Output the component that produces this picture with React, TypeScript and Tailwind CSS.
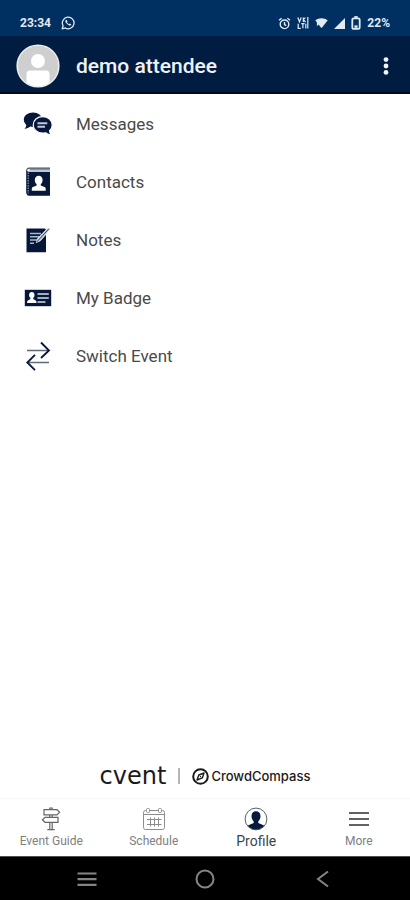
import React from 'react';

const NAVY = '#06173a';

const menuItems = [
  { label: 'Messages', icon: <MessagesIcon /> },
  { label: 'Contacts', icon: <ContactsIcon /> },
  { label: 'Notes', icon: <NotesIcon /> },
  { label: 'My Badge', icon: <BadgeIcon /> },
  { label: 'Switch Event', icon: <SwitchIcon /> },
];

const tabs = [
  { label: 'Event Guide', icon: <SignpostIcon />, active: false },
  { label: 'Schedule', icon: <CalendarIcon />, active: false },
  { label: 'Profile', icon: <ProfileIcon />, active: true },
  { label: 'More', icon: <MoreIcon />, active: false },
];

export default function App() {
  return (
    <div className="flex min-h-screen flex-col bg-white font-[Roboto,sans-serif]">
      <StatusBar />

      <header className="flex h-[58px] items-center border-b-2 border-[#020a18] bg-[#001d41] px-4 pt-1">
        <Avatar />
        <h1 className="ml-4 flex-1 text-[21px] leading-7 font-medium text-[#eef2f7]">demo attendee</h1>
        <button type="button" aria-label="More options" className="flex h-10 w-4 items-center justify-center">
          <svg width="6" height="18" viewBox="0 0 6 18" fill="#f1f4f8">
            <circle cx="3" cy="2.6" r="2.4" />
            <circle cx="3" cy="9" r="2.4" />
            <circle cx="3" cy="15.4" r="2.4" />
          </svg>
        </button>
      </header>

      <main className="flex flex-1 flex-col">
        <ul>
          {menuItems.map(item => (
            <li key={item.label}>
              <button type="button" className="flex h-[58px] w-full items-center px-6 pt-0.5 text-left">
                <span className="flex w-7 justify-center">{item.icon}</span>
                <span className="ml-6 text-[17px] leading-6 text-[#4a4a4a]">{item.label}</span>
              </button>
            </li>
          ))}
        </ul>
        <BrandFooter />
      </main>

      <nav className="grid h-[58px] grid-cols-4 border-t border-[#f7f7f7] bg-white">
        {tabs.map(tab => (
          <button
            key={tab.label}
            type="button"
            aria-current={tab.active ? 'page' : undefined}
            className="flex flex-col items-center pt-2"
          >
            <span className="flex h-6 items-center">{tab.icon}</span>
            <span
              className={
                tab.active
                  ? 'pt-0.5 text-[14px] leading-4 text-[#37474f]'
                  : 'pt-0.5 text-[12px] leading-4 text-[#808080]'
              }
            >
              {tab.label}
            </span>
          </button>
        ))}
      </nav>

      <SystemNav />
    </div>
  );
}

function StatusBar() {
  return (
    <div className="flex h-9 items-center justify-between bg-[#002f62] px-5 pt-2.5 text-[12px] leading-4 font-bold text-[#e3eaf2]">
      <div className="flex items-center gap-2.5">
        <span>23:34</span>
        <svg width="14" height="14" viewBox="0 0 24 24" fill="none" stroke="currentColor" strokeWidth="2.2">
          <path d="M2 22l1.6-5.2A10 10 0 1 1 7.2 20.500z" strokeLinejoin="round" />
          <path
            d="M8.300 6.800c-1.300 1-1.200 3 .6 5.400 2.200 3 5 4.800 7 4.200 1-.3 1.700-1.300 1.600-2.200l-2.600-1.400-1.300 1.300c-1.500-.6-2.700-1.800-3.400-3.200l1-1.300-1.200-2.800z"
            fill="currentColor"
            stroke="none"
          />
        </svg>
      </div>
      <div className="flex items-center gap-1.5">
        <svg width="13" height="13" viewBox="0 0 13 13" fill="none" stroke="currentColor" strokeWidth="1.4">
          <circle cx="6.500" cy="7.300" r="4.300" />
          <path d="M6.500 5v2.600l1.800 1M1 3.200l2.600-2M12 3.200l-2.600-2" />
        </svg>
        <svg width="12" height="12" viewBox="0 0 12 12" fill="none" stroke="currentColor" strokeWidth="1.200">
          <path d="M.8.6l1.700 4.200L4.200.6M6.300.4v4.600M6.300 2.700L8.400.6M6.300 2.700l2.300 2.300M10.800 0v11.500M1.200 6.700v4.600h2.600M4.200 6.700h3.400M5.900 6.700v4.600M8.800 6.800v4.600" />
        </svg>
        <svg width="13" height="12" viewBox="0 0 13 12" fill="currentColor">
          <path d="M.3 3.300C3.800.4 9.200.4 12.700 3.300L7.300 10.300a1 1 0 0 1-1.600 0L3.600 7.600 1.900 9.200V5.400z" />
        </svg>
        <svg width="11" height="11" viewBox="0 0 11 11" fill="currentColor">
          <path d="M11 0v11H0z" />
        </svg>
        <svg width="10" height="14" viewBox="0 0 10 14" fill="none" stroke="currentColor" strokeWidth="1.800">
          <rect x="1.300" y="2.300" width="7.400" height="10.600" rx="1.400" />
          <path d="M3.300 1h3.400" />
          <path d="M3.400 10.600h3.200" strokeWidth="2.400" />
        </svg>
        <span>22%</span>
      </div>
    </div>
  );
}

function Avatar() {
  return (
    <svg width="44" height="44" viewBox="0 0 44 44" aria-hidden="true">
      <defs>
        <clipPath id="avatar-clip">
          <circle cx="22" cy="22" r="20.500" />
        </clipPath>
      </defs>
      <circle cx="22" cy="22" r="20.500" fill="#cfcfcf" />
      <g clipPath="url(#avatar-clip)" fill="#ffffff">
        <circle cx="22" cy="17" r="7" />
        <path d="M10.500 44V30a3.500 3.500 0 0 1 3.500-3.500h16a3.500 3.500 0 0 1 3.500 3.500v14z" />
      </g>
      <circle cx="22" cy="22" r="20.800" fill="none" stroke="#eeeeee" strokeWidth="1.600" />
    </svg>
  );
}

function MessagesIcon() {
  return (
    <svg width="30" height="26" viewBox="0 0 30 26" fill={NAVY} className="shrink-0">
      <path d="M10 1.500c5 0 9 3 9 7.300s-3.800 7.200-8.700 7.200c-1 0-2.100-.1-3-.4-1.400 1.200-3.400 2.200-5.900 2.300 1-1 1.800-2.300 1.900-4C1.900 12.600.8 10.800.8 8.800.8 4.500 5 1.500 10 1.500z" />
      <path
        d="M19.700 5.700c5.400 0 9.500 3.500 9.500 8.200 0 2.300-1 4.300-2.600 5.700.1 1.700.6 3.200 1.700 4.600-2.500-.3-4.300-1.200-5.700-2.400-.9.200-1.900.3-2.900.3-5.400 0-9.500-3.500-9.500-8.200s4.100-8.200 9.500-8.200z"
        stroke="#ffffff"
        strokeWidth="1.200"
      />
      <path d="M14.500 12.200h9.800M14.500 15.800h7.500" stroke="#bccbdc" strokeWidth="1.900" />
    </svg>
  );
}

function ContactsIcon() {
  return (
    <svg width="26" height="30" viewBox="0 0 26 30">
      <path d="M25 2.500H4.500" fill="none" stroke="#8393a6" strokeWidth="2" />
      <path d="M25 1.200H4.200C2.600 1.200 1.700 2.200 1.700 3.500v23" fill="none" stroke="#44556c" strokeWidth="1.200" />
      <path d="M3.500 4.800H25v24H4a2.400 2.400 0 0 1-2.400-2.400V4z" fill={NAVY} />
      <path d="M3.200 5.500v21" stroke="#8fa0b3" strokeWidth="1.200" strokeDasharray="1.600 .9" />
      <path
        d="M13.700 8.800c2.400 0 3.900 1.800 3.900 4.100 0 1.800-.8 3.300-1.800 4.100v1.400l3.700 1.700c.9.400 1.200 1 1.200 1.900v1.700H6.800V22c0-.9.300-1.500 1.200-1.900l3.600-1.700V17c-1-.8-1.800-2.300-1.800-4.100 0-2.300 1.500-4.100 3.900-4.100z"
        fill="#ffffff"
      />
    </svg>
  );
}

function NotesIcon() {
  return (
    <svg width="26" height="26" viewBox="0 0 26 26">
      <path d="M1.500 1.500H20l1 1v22.700H1.500z" fill={NAVY} />
      <path d="M5 6.500h11M5 9.800h9.500M5 13h7M5 16.200h4" stroke="#a9b8c9" strokeWidth="1.500" />
      <path d="M23 .8l2.300 1.700-10 11.300-4.100 1.900 1.400-4.200z" fill="#c3ced9" stroke="#ffffff" strokeWidth=".7" />
      <path d="M24 1.600L13.600 13l-2.200 2.300" stroke="#35465e" strokeWidth="1" fill="none" />
    </svg>
  );
}

function BadgeIcon() {
  return (
    <svg width="28" height="18" viewBox="0 0 28 18">
      <rect x=".8" y=".8" width="26.400" height="16.400" fill={NAVY} />
      <path
        d="M7.800 3c1.700 0 2.700 1.200 2.700 2.900 0 1.300-.5 2.300-1.300 2.900v1.300l2.500 1.400c.6.400.8.800.8 1.500v1H3.100v-1c0-.7.200-1.100.8-1.500l2.500-1.400V8.800C5.600 8.200 5.100 7.200 5.100 5.900 5.100 4.200 6.100 3 7.800 3z"
        fill="#ffffff"
      />
      <path d="M13.500 5h11.300M13.500 9h11.300M13.500 13h8" stroke="#d5dee8" strokeWidth="1.500" />
    </svg>
  );
}

function SwitchIcon() {
  return (
    <svg width="26" height="32" viewBox="0 0 26 32" fill="none">
      <path d="M2 10.500h21M24 22.500H3" stroke="#5f6b7a" strokeWidth="1.500" />
      <path d="M16 2.500l8 8-8 7.500M10 14.800l-7.700 7.700L10 30.200" stroke={NAVY} strokeWidth="1.800" />
    </svg>
  );
}

function BrandFooter() {
  return (
    <div className="mt-auto flex h-11 items-center justify-center text-[#1a1a1a]">
      <span className="font-['DejaVu_Sans',sans-serif] text-[24px] leading-6 font-normal">cvent</span>
      <span className="mx-3 h-4 w-0.5 bg-[#b5b5b5]" />
      <svg width="17" height="17" viewBox="0 0 17 17" fill="none" stroke="currentColor">
        <circle cx="8.500" cy="8.500" r="7.300" strokeWidth="2" />
        <path d="M12 5L10.300 9.900 5 12l1.800-5z" strokeWidth="1.400" strokeLinejoin="round" />
        <circle cx="8.500" cy="8.500" r=".7" fill="currentColor" stroke="none" />
      </svg>
      <span className="ml-0.5 font-[Inter,sans-serif] text-[13px] leading-5 font-medium">CrowdCompass</span>
    </div>
  );
}

function SignpostIcon() {
  return (
    <svg width="20" height="24" viewBox="0 0 20 24" fill="none" stroke="#666666" strokeWidth="1.200">
      <path d="M8.800 2.600V1h2.400v1.600M3 2.700h13l2.600 2.500L16 7.800H3zM17 10.300H4L1.400 12.800 4 15.300h13zM8.800 7.800v2.500M11.200 7.800v2.500M8.800 15.300v6.700M11.200 15.300v6.700M6.300 22.600h7.400" />
    </svg>
  );
}

function CalendarIcon() {
  return (
    <svg width="24" height="24" viewBox="0 0 24 24" fill="none" stroke="#8c8c8c" strokeWidth="1">
      <path d="M4.500 3.500h-1a2 2 0 0 0-2 2v15a2 2 0 0 0 2 2h17a2 2 0 0 0 2-2v-15a2 2 0 0 0-2-2h-1M7.500 3.500h9M1.500 7.500h21" />
      <rect x="4.500" y="1.500" width="3" height="4" rx="1" />
      <rect x="16.500" y="1.500" width="3" height="4" rx="1" />
      <path d="M8.500 10.500v9M12.500 10.500v9M16.500 10.500v9M5 12.500h14.500M5 17.500h14.500" />
    </svg>
  );
}

function ProfileIcon() {
  return (
    <svg width="24" height="24" viewBox="0 0 24 24">
      <defs>
        <clipPath id="profile-clip">
          <circle cx="12" cy="12" r="10.600" />
        </clipPath>
      </defs>
      <circle cx="12" cy="12" r="10.900" fill="#ffffff" stroke="#536070" strokeWidth="1" />
      <path
        clipPath="url(#profile-clip)"
        d="M12 4.300c2.700 0 4.500 1.900 4.500 4.800 0 2.300-.9 4.200-2.200 5.300v1.700l4.700 1.800c1.300.5 2 1.300 2 2.600V24H3v-3.500c0-1.300.7-2.100 2-2.600l4.700-1.800v-1.700C8.400 13.300 7.500 11.400 7.500 9.100c0-2.900 1.800-4.800 4.500-4.800z"
        fill="#071a3b"
      />
    </svg>
  );
}

function MoreIcon() {
  return (
    <svg width="22" height="18" viewBox="0 0 22 18" stroke="#626262" strokeWidth="2">
      <path d="M1 3h20M1 9h20M1 15h20" />
    </svg>
  );
}

function SystemNav() {
  return (
    <div className="flex h-11 items-center justify-center gap-[98px] border-t border-[#4c5052] bg-black">
      <button type="button" aria-label="Recent apps">
        <svg width="20" height="16" viewBox="0 0 20 16" stroke="#858585" strokeWidth="2.200">
          <path d="M.5 2.500h19M.5 8.200h19M.5 13.900h19" />
        </svg>
      </button>
      <button type="button" aria-label="Home">
        <svg width="20" height="20" viewBox="0 0 20 20" fill="none" stroke="#858585" strokeWidth="2">
          <circle cx="10" cy="10" r="8.500" />
        </svg>
      </button>
      <button type="button" aria-label="Back">
        <svg width="20" height="18" viewBox="0 0 20 18" fill="none" stroke="#858585" strokeWidth="2">
          <path d="M15 1.500L5 9l10 7.500" />
        </svg>
      </button>
    </div>
  );
}
